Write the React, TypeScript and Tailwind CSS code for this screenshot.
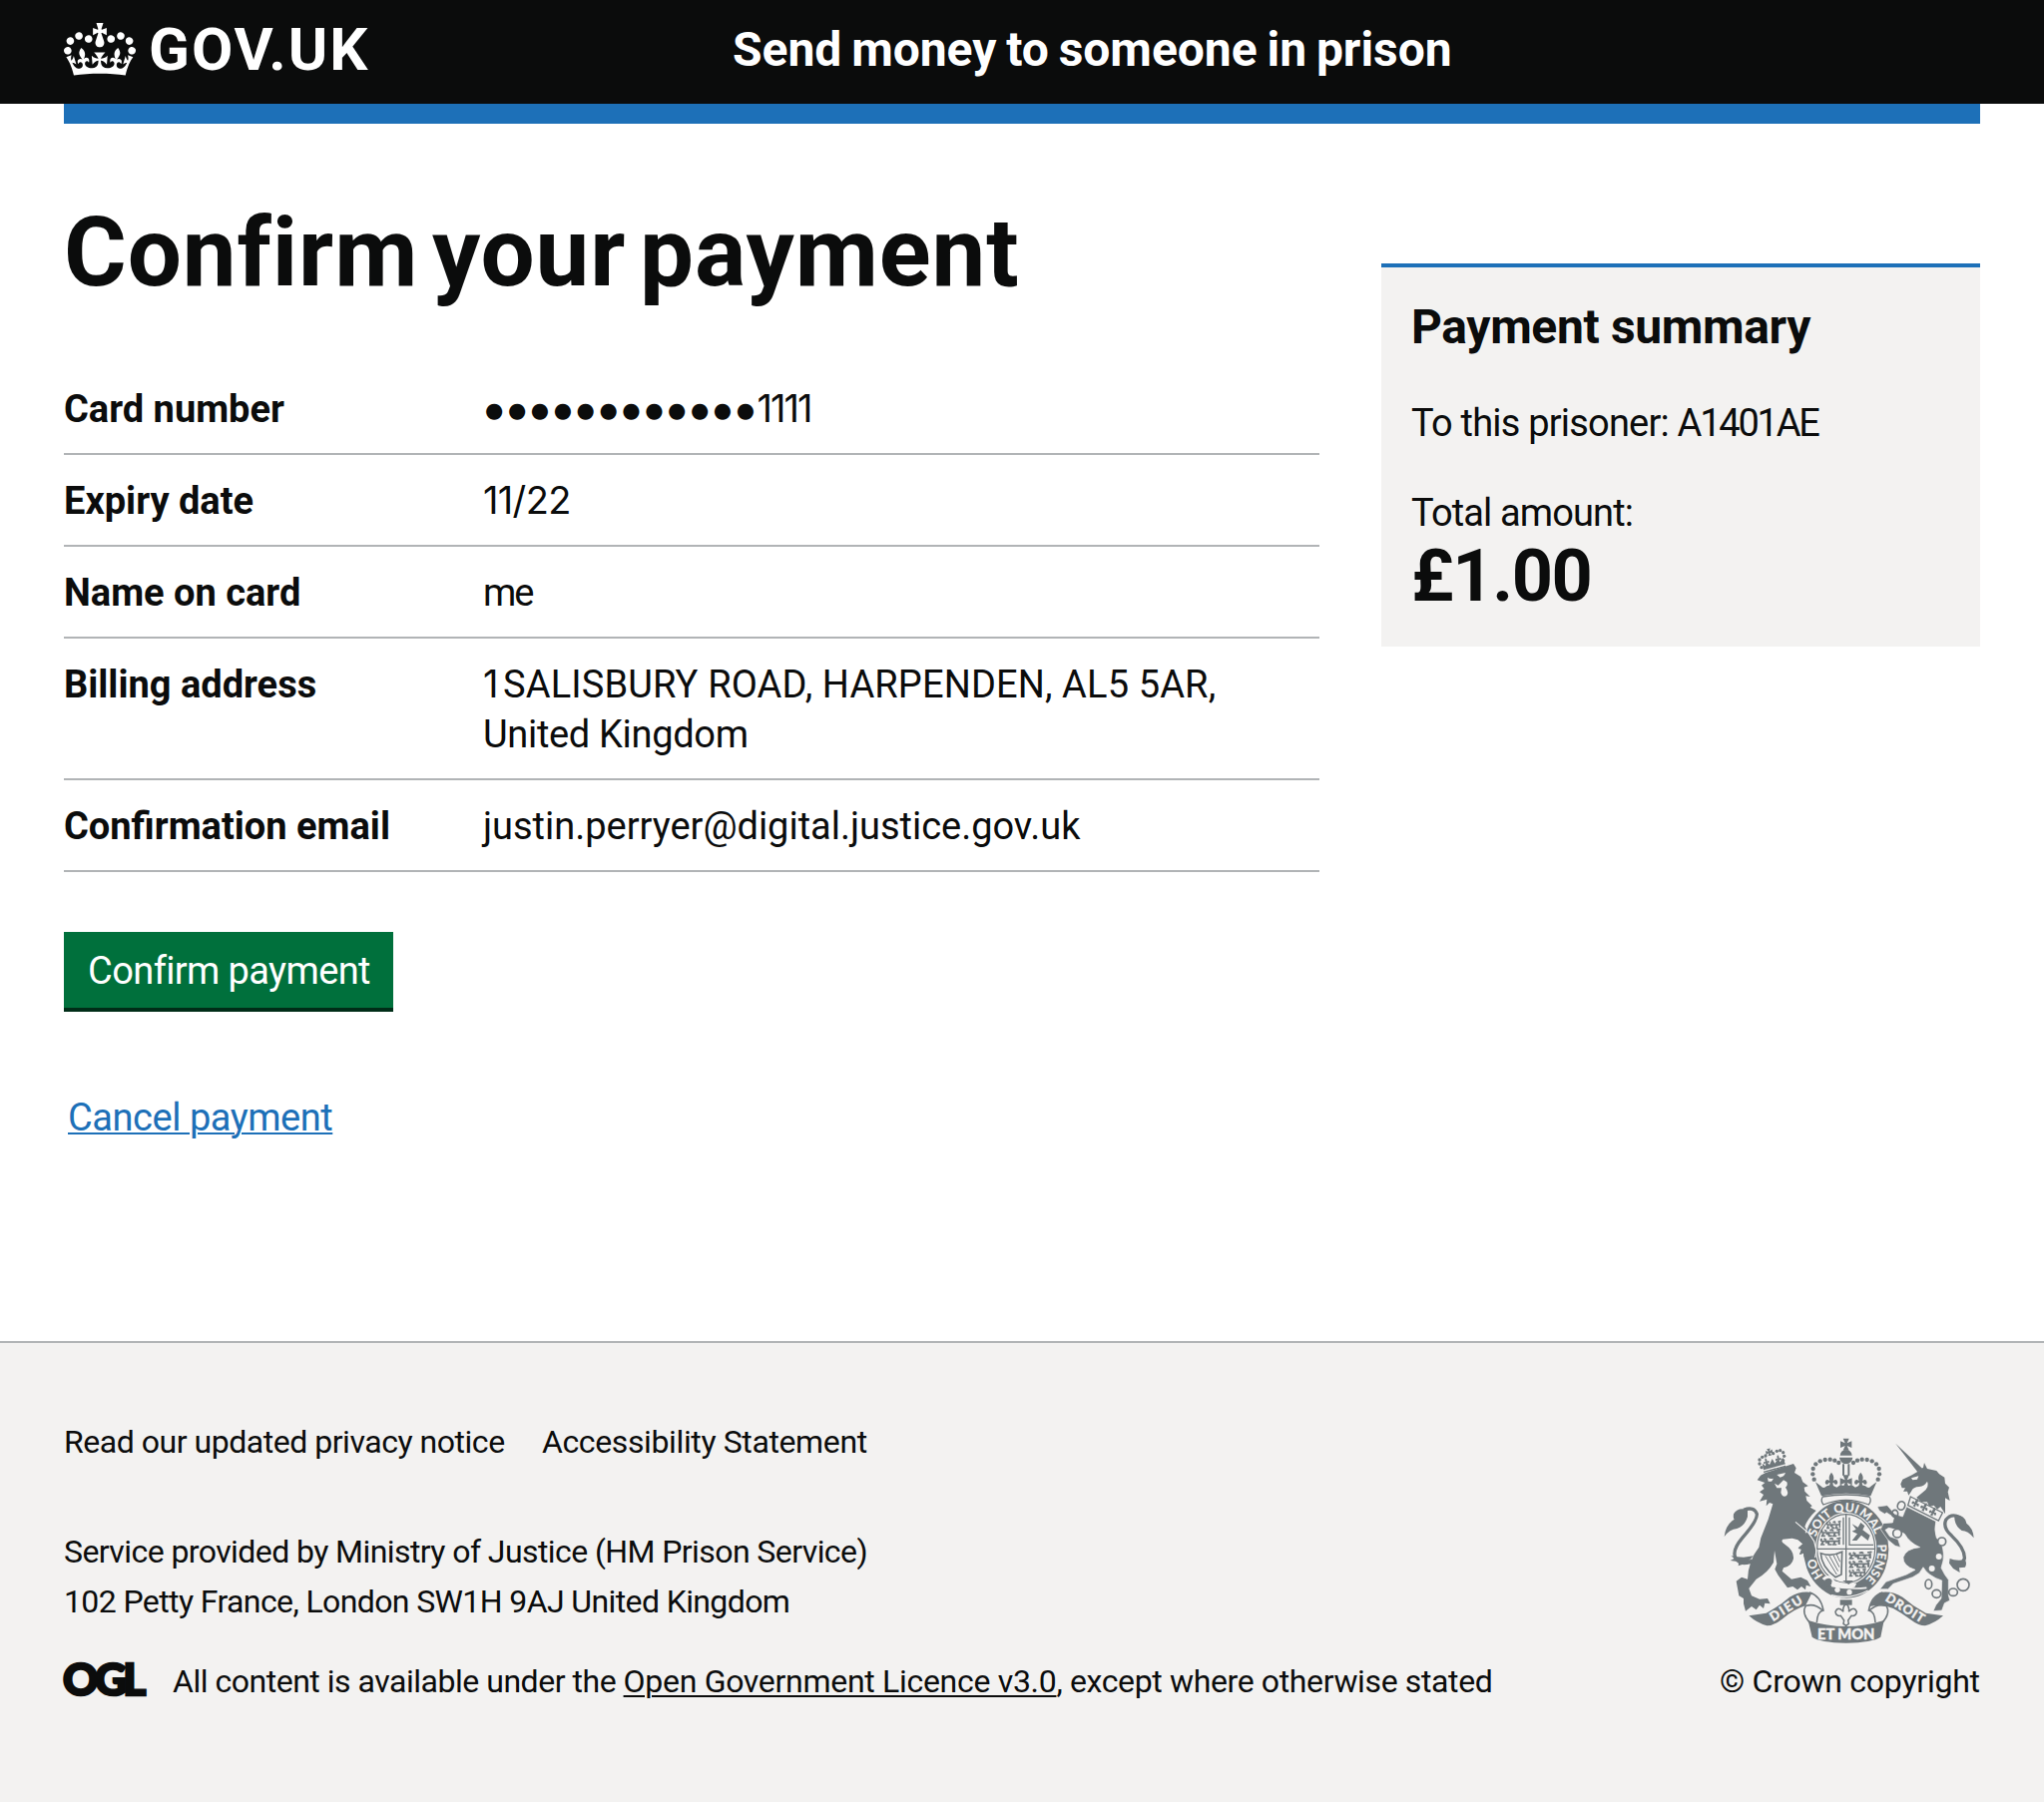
import React from 'react';

const CROWN =
  'M25 30.2c3.5 1.5 7.7-.2 9.1-3.7 1.5-3.6-.2-7.8-3.9-9.2-3.6-1.4-7.6.3-9.1 3.9-1.4 3.5.3 7.5 3.9 9zM9 39.5c3.6 1.5 7.8-.2 9.2-3.7 1.5-3.6-.2-7.8-3.9-9.1-3.6-1.5-7.6.2-9.1 3.8-1.4 3.5.3 7.5 3.8 9zM4.4 57.2c3.5 1.5 7.7-.2 9.1-3.8 1.5-3.6-.2-7.7-3.9-9.1-3.5-1.5-7.6.3-9.1 3.8-1.4 3.5.3 7.6 3.9 9.1zm38.3-21.4c3.5 1.5 7.7-.2 9.1-3.8 1.5-3.6-.2-7.7-3.9-9.1-3.6-1.5-7.6.3-9.1 3.8-1.3 3.6.4 7.7 3.9 9.1zm64.4-5.6c-3.6 1.5-7.8-.2-9.1-3.7-1.5-3.6.2-7.8 3.8-9.2 3.6-1.4 7.7.3 9.2 3.9 1.3 3.5-.4 7.5-3.9 9zm15.9 9.3c-3.6 1.5-7.7-.2-9.1-3.7-1.5-3.6.2-7.8 3.7-9.1 3.6-1.5 7.7.2 9.2 3.8 1.5 3.5-.3 7.5-3.8 9zm4.7 17.7c-3.6 1.5-7.8-.2-9.2-3.8-1.5-3.6.2-7.7 3.9-9.1 3.6-1.5 7.7.3 9.2 3.8 1.3 3.5-.4 7.6-3.9 9.1zM89.3 35.8c-3.6 1.5-7.8-.2-9.2-3.8-1.4-3.6.2-7.7 3.9-9.1 3.6-1.5 7.7.3 9.2 3.8 1.4 3.6-.3 7.7-3.9 9.1zM69.7 17.7l8.9 4.7V9.3l-8.9 2.8c-.2-.3-.5-.6-.9-.9L72.4 0H59.6l3.5 11.2c-.3.3-.6.5-.9.9l-8.8-2.8v13.1l8.8-4.7c.3.3.6.7.9.9l-5 15.4v.1c-.2.8-.4 1.6-.4 2.4 0 4.1 3.1 7.5 7 8.1h.2c.3 0 .7.1 1 .1.4 0 .7 0 1-.1h.2c4-.6 7.1-4.1 7.1-8.1 0-.8-.1-1.7-.4-2.4V34l-5.1-15.4c.4-.2.7-.6 1-.9zM66 92.8c16.9 0 32.8 1.1 47.1 3.2 4-16.9 8.9-26.7 14-33.5l-9.6-3.4c1 4.9 1.1 7.2 0 10.2-1.5-1.4-3-4.3-4.2-8.7L108.6 76c2.8-2 5-3.2 7.5-3.3-4.4 9.4-10 11.9-13.6 11.2-4.3-.8-6.3-4.6-5.6-7.9 1-4.7 5.7-5.9 8-.5 4.3-8.7-3-11.4-7.6-8.8 7.1-7.2 7.9-13.5 2.1-21.1-8 6.1-8.1 12.3-4.5 20.8-4.7-5.4-12.1-2.5-9.5 6.2 3.4-5.2 7.9-2 7.2 3.1-.6 4.3-6.4 7.8-13.5 7.2-10.3-.9-10.9-8-11.2-13.8 2.5-.5 7.1 1.8 11 7.3L80.2 60c-4.1 4.4-8 5.3-12.3 5.4 1.4-4.4 8-11.6 8-11.6H55.5s6.4 7.2 7.9 11.6c-4.2-.1-8-1-12.3-5.4l1.4 16.4c3.9-5.5 8.5-7.7 10.9-7.3-.3 5.8-.9 12.8-11.1 13.8-7.2.6-12.9-2.9-13.5-7.2-.7-5 3.8-8.3 7.1-3.1 2.7-8.7-4.6-11.6-9.4-6.2 3.7-8.5 3.6-14.7-4.6-20.8-5.8 7.6-5 13.9 2.2 21.1-4.7-2.6-11.9.1-7.7 8.8 2.3-5.5 7.1-4.2 8.1.5.7 3.3-1.3 7.1-5.7 7.9-3.5.7-9-1.8-13.5-11.2 2.5.1 4.7 1.3 7.5 3.3l-4.7-15.4c-1.2 4.4-2.7 7.2-4.3 8.7-1.1-3-.9-5.3 0-10.2l-9.5 3.4c5 6.9 9.9 16.7 14 33.5 14.8-2.1 30.8-3.2 47.7-3.2z';

const INK = '#6f777b';
const PAPER = '#f3f2f1';

const arch: [number, number][] = [
  [324, 158], [320, 142], [321, 126], [329, 112], [342, 103], [357, 99], [372, 98], [386, 101], [398, 108],
];

const lionCrown: [number, number][] = [
  [166, 122], [160, 111], [160, 99], [168, 91], [178, 87], [201, 80], [212, 73], [222, 71], [231, 77], [234, 88], [231, 101],
];

function Fleur({ x, y, s = 1, r = 0 }: { x: number; y: number; s?: number; r?: number }) {
  return (
    <path
      transform={`translate(${x} ${y}) rotate(${r}) scale(${s})`}
      d="M0-22Q10-10 5 2Q16-6 18 6Q18 14 10 12Q8 6 4 8L6 20H-6L-4 8Q-8 6-10 12Q-18 14-18 6Q-16-6-5 2Q-10-10 0-22Z"
    />
  );
}

function Cross({ x, y, s = 1, r = 0 }: { x: number; y: number; s?: number; r?: number }) {
  return (
    <path
      transform={`translate(${x} ${y}) rotate(${r}) scale(${s})`}
      d="M-9-18H9L3-4L17-10V10L3 4L9 18H-9L-3 4L-17 10V-10L-3-4Z"
    />
  );
}

/* One walking lion of the shield's quarters. */
function Passant({ x, y, w = 1 }: { x: number; y: number; w?: number }) {
  return (
    <g transform={`translate(${x} ${y}) scale(${w} 1)`} fill="none" stroke={INK} strokeWidth="5">
      <path d="M2 2Q-2 12 8 10H44M6 10L2 20H10M18 10L20 20H28M36 10L32 20H40M46 4V20M8 2L14 6M22 4Q30-2 30 6M40 2L50 0M12 14H22" />
    </g>
  );
}

function RoyalArms() {
  return (
    <svg viewBox="52 33 756 618" className="h-[206px] w-[252px]" fill={INK} aria-label="Royal coat of arms">
      {/* lion's crown */}
      {lionCrown.map(([x, y]) => <circle key={`${x}-${y}`} cx={x} cy={y} r="5" />)}
      <Cross x={189} y={76} s={0.6} r={-13} />
      <path d="M168 110L178 118L180 104L190 114L198 96L206 110L214 98L222 106L230 92L236 108L238 112L172 130Z" />
      <path d="M172 136L238 118" stroke={INK} strokeWidth="4" />
      <Fleur x={180} y={104} s={0.5} r={-15} />
      <Fleur x={216} y={95} s={0.5} r={-10} />

      {/* lion */}
      <path d="M153 160L163 146L178 138L262 111L270 124L265 138L284 150L290 166L306 178L294 182L296 194L312 210L299 208L302 222L318 238L312 242L330 252L318 264Q300 285 296 300L310 322L326 346L330 372L326 390L316 384L318 396L304 388L294 392L292 380L280 384L286 368L276 366L290 352L276 340L258 335L230 338Q222 346 236 353Q264 372 262 396Q258 418 232 424L228 434L256 458L284 452L304 462L314 480L300 476L298 490L286 480L274 490L260 480L244 484L216 446L206 428L212 412L205 372L202 408Q184 440 150 458L128 486L136 508L160 518L184 516L192 532L176 530L172 546L160 536L150 550L136 540L118 554L112 532L112 516L98 508L94 486L90 464L106 452L124 458Q126 402 158 362L164 334L186 278L200 232L190 228L180 238L182 218L160 224L172 204L160 196L174 186L166 176L176 168Z" />
      <g fill={PAPER}>
        <path d="M184 152Q190 158 202 155L196 164L186 164ZM212 144L238 138Q234 150 222 152Z" />
        <path d="M205 170L216 176L232 160L242 166Q246 176 238 182Q250 198 240 208Q228 212 224 198L226 184L212 184Z" />
      </g>
      <path d="M138 402Q104 420 88 394Q76 372 108 334Q154 282 152 262Q144 238 112 250" fill="none" stroke={INK} strokeWidth="10" />
      <path d="M124 250Q96 240 82 262Q80 276 84 278Q58 294 54 330Q70 308 92 306Q116 298 124 270Z" />
      <path d="M74 388Q92 392 112 392L142 388L128 402L136 412L108 414L96 418L98 406L72 402L84 396Z" />

      {/* unicorn */}
      <path d="M569 50L650 126L635 136Z" />
      <path d="M584 172L590 158L618 145L636 134L652 122L655 108L664 126L692 132L700 142L716 152L718 170L730 182L726 196L732 222L718 214L718 262L704 240L694 248L684 236L670 240L664 226L646 226L632 212L652 196Q672 180 664 164Q656 178 640 180Q622 180 616 194L608 206L604 194L592 194L598 184L588 184Z" />
      <path d="M616 154L638 148L634 158L620 160Z" fill={PAPER} />
      <path d="M614 210L710 258L698 282L606 236Z" fill={PAPER} stroke={INK} strokeWidth="4" />
      <Fleur x={630} y={228} s={0.65} r={26} />
      <Fleur x={656} y={241} s={0.65} r={26} />
      <Fleur x={682} y={255} s={0.65} r={26} />
      <path d="M762 272Q736 258 720 280Q710 304 738 328Q778 366 776 396Q768 420 736 408" fill="none" stroke={INK} strokeWidth="10" />
      <path d="M746 266Q776 262 782 290Q802 304 804 334Q786 312 768 312Q744 296 746 266Z" />
      <path d="M732 396Q748 404 778 400Q784 412 778 422L760 424L762 438L742 426L730 410Z" />

      {/* garter and shield */}
      <ellipse cx="420" cy="368" rx="131" ry="150" fill={PAPER} />
      <ellipse cx="420" cy="368" rx="128" ry="147" />
      <ellipse cx="420" cy="366" rx="92" ry="109" fill={PAPER} />
      <ellipse cx="420" cy="366" rx="87" ry="103" fill="none" stroke={INK} strokeWidth="3.5" />
      <path d="M332 367H508M420 262V464M430 272V355H502M412 272V355" stroke={INK} strokeWidth="4" fill="none" />
      <Passant x={362} y={284} w={0.85} />
      <Passant x={346} y={308} w={1.15} />
      <Passant x={344} y={334} w={1.2} />
      <Passant x={430} y={376} w={1.35} />
      <Passant x={430} y={402} w={1.25} />
      <Passant x={430} y={428} />
      <path d="M438 292L456 302L464 288L476 298L470 310L492 326L486 342L466 326L452 342L438 342L454 322L438 314L450 308Z" />
      <path d="M344 380Q376 392 408 376L406 444L388 452Q346 420 344 380Z" fill="none" stroke={INK} strokeWidth="5" />
      <path d="M358 388L392 444M370 388L396 434M382 386L400 422M392 384L402 406" stroke={INK} strokeWidth="3" />
      <path id="garter" d="M420 481A95 113 0 0 1 420 255A95 113 0 0 1 420 481" fill="none" />
      <g fill={PAPER} fontFamily="Lato, sans-serif" fontWeight="900" fontSize="37" textAnchor="middle">
        <text><textPath href="#garter" startOffset="16.5%">HO</textPath></text>
        <text><textPath href="#garter" startOffset="37%">SOIT</textPath></text>
        <text><textPath href="#garter" startOffset="50%">QUI</textPath></text>
        <text><textPath href="#garter" startOffset="62%">MAL</textPath></text>
        <text><textPath href="#garter" startOffset="81.5%">PENSE</textPath></text>
      </g>
      <path d="M348 456Q362 440 380 452L386 464Q420 474 452 470L446 482Q410 488 376 478" fill={PAPER} />
      <path d="M356 460Q370 450 378 462L376 474L354 490L346 480L358 478Z" />
      <path d="M376 478Q430 490 482 484" fill="none" stroke={PAPER} strokeWidth="5" />
      <path d="M376 506Q430 522 486 492" fill="none" stroke={PAPER} strokeWidth="4" />
      <path d="M410 462H442L428 474Z" />
      <circle cx="394" cy="490" r="8" fill={PAPER} />
      <circle cx="430" cy="497" r="8" fill={PAPER} />

      {/* lion's foreleg over the garter */}
      <path d="M262 288L302 322L320 346L327 372L324 389L314 382L314 394L303 386L293 392L292 380L280 384L286 368L276 364L290 352L274 338L254 330Z" />
      <path d="M268 286L308 320L324 344L331 372L327 393" fill="none" stroke={PAPER} strokeWidth="3.5" />

      {/* unicorn's body and forelegs over the garter */}
      <path
        d="M602 240L690 284Q684 312 692 334Q718 356 712 402L706 424Q716 446 728 460L728 506L732 522L716 530L708 552L682 554L690 536L706 516L708 462Q666 448 652 422L640 440L620 452L562 472L546 488L522 488L540 466L602 444L628 430Q590 418 592 392Q600 366 642 362Q612 350 596 322Q572 306 548 304L538 310L552 330L576 338L584 362L568 358L546 340L524 308L532 290L560 288L564 272L542 258L536 262L520 252L514 240L544 236L566 262L590 270Z"
        stroke={PAPER}
        strokeWidth="2"
      />
      <g fill="none" stroke={INK} strokeWidth="5">
        <ellipse cx="586" cy="237" rx="11" ry="13" transform="rotate(20 586 237)" />
        <ellipse cx="567" cy="261" rx="9" ry="11" />
        <ellipse cx="574" cy="320" rx="13" ry="13" fill={PAPER} />
        <circle cx="708" cy="345" r="12" fill={PAPER} />
        <ellipse cx="668" cy="473" rx="10" ry="14" />
        <ellipse cx="692" cy="502" rx="13" ry="12" />
        <ellipse cx="742" cy="497" rx="13" ry="11" />
        <circle cx="772" cy="475" r="18" />
      </g>
      <circle cx="699" cy="390" r="9" fill={PAPER} />
      <circle cx="678" cy="426" r="9" fill={PAPER} />

      {/* imperial crown */}
      {arch.map(([x, y]) => (
        <React.Fragment key={`${x}-${y}`}>
          <circle cx={x} cy={y} r="6.5" />
          <circle cx={840 - x} cy={y} r="6.5" />
        </React.Fragment>
      ))}
      <Cross x={420} y={53} />
      <path d="M402 86Q404 70 420 70Q436 70 438 86ZM400 92H440Q438 110 420 112Q402 110 400 92Z" />
      <path d="M412 112V146M428 112V146" stroke={INK} strokeWidth="6" />
      <path d="M328 166L344 178Q352 188 362 178L376 174L392 182L404 174L420 180L436 174L448 182L464 174L478 178Q488 188 496 178L512 166L494 208Q420 192 346 208Z" />
      <Fleur x={376} y={160} s={1.05} />
      <Fleur x={464} y={160} s={1.05} />
      <Cross x={420} y={164} s={1.05} />
      <path d="M350 210Q420 198 490 210Q498 222 488 234Q420 206 352 234Q342 222 350 210Z" fill={PAPER} stroke={INK} strokeWidth="4" />

      {/* pendant */}
      <path d="M402 520H438V536H402Z" />
      <path d="M420 530Q432 544 428 556Q444 538 452 556Q450 570 436 568L426 582L428 592L420 598L412 592L414 582L404 568Q390 570 388 556Q396 538 412 556Q408 544 420 530Z" fill={PAPER} stroke={INK} strokeWidth="4.5" />

      {/* motto ribbon */}
      <path d="M128 568L180 560Q218 540 250 512Q282 492 318 498L298 538Q264 548 228 578Q202 598 182 598Q152 590 128 568Z" />
      <path d="M712 568L660 560Q622 540 590 512Q558 492 522 498Q500 518 490 540Q530 532 562 546Q584 558 612 578Q638 598 658 598Q688 590 712 568Z" />
      <path d="M306 582Q420 618 534 582L524 632Q500 648 420 650Q340 648 318 632Z" />
      <path d="M310 498Q344 508 352 552Q334 554 332 588M300 536Q284 560 312 590M300 538Q326 530 350 552" fill="none" stroke={INK} strokeWidth="4.5" />
      <path d="M530 498Q496 508 488 552Q506 554 508 588M540 536Q556 560 528 590M540 538Q514 530 490 552" fill="none" stroke={INK} strokeWidth="4.5" />
      <g fill={PAPER} stroke={PAPER} strokeWidth="1" fontFamily="Lato, sans-serif" fontWeight="900" textAnchor="middle">
        <text transform="translate(246 557) rotate(-32)" fontSize="38" textLength="108">DIEU</text>
        <text transform="translate(591 556) rotate(32)" fontSize="38" textLength="130">DROIT</text>
        <text x="420" y="639" fontSize="44" textLength="172" lengthAdjust="spacingAndGlyphs">ET MON</text>
      </g>
    </svg>
  );
}

function Row({ label, children }: { label: string; children: React.ReactNode }) {
  return (
    <div className="flex border-b-2 border-[#b1b4b6] pt-[21px] pb-[19px] text-[38px] leading-[50px]">
      <dt className="w-[420px] shrink-0 font-bold">{label}</dt>
      <dd className="whitespace-nowrap">{children}</dd>
    </div>
  );
}

export default function App() {
  return (
    <div className="flex min-h-[1806px] w-[2048px] flex-col bg-white font-[Roboto,sans-serif] text-[#0b0c0c]">
      <header className="bg-[#0b0c0c] px-16 text-white">
        <div className="flex h-[104px] items-start">
          <a className="flex w-[670px] items-start gap-[13px]">
            <svg viewBox="0 0 132 97" className="mt-[23px] h-[53px] w-[72px]" fill="currentColor">
              <path fillRule="evenodd" d={CROWN} />
            </svg>
            <span className="mt-5 text-[60px] leading-[60px] font-bold tracking-[1.98px]">GOV.UK</span>
          </a>
          <span className="mt-5 text-[48px] leading-[60px] font-bold tracking-[-0.04px] [word-spacing:-2px]">Send money to someone in prison</span>
        </div>
      </header>
      <div className="mx-16 h-5 bg-[#1d70b8]" />

      <main className="flex flex-1 justify-between px-16">
        <section className="w-[1258px] pt-[79px]">
          <h1 className="text-[96px] leading-[100px] font-bold tracking-[0.9px] [word-spacing:-11px]">Confirm your payment</h1>
          <dl className="mt-[61px]">
            <Row label="Card number">
              <span className="relative -top-[5px] ml-0.5 font-['DejaVu_Sans',sans-serif] text-[21px] leading-none tracking-[4.56px]">●●●●●●●●●●●●</span>
              <span className="-ml-0.5 font-[Inter,sans-serif] leading-none tracking-[-2px]">1111</span>
            </Row>
            <Row label="Expiry date"><span className="font-[Inter,sans-serif] leading-none tracking-[-0.65px]">11/22</span></Row>
            <Row label="Name on card"><span className="tracking-[-2px]">me</span></Row>
            <Row label="Billing address">
              <span className="tracking-[0.13px]">
                <span className="font-[Inter,sans-serif] leading-none tracking-[-5px]">1</span> SALISBURY ROAD, HARPENDEN, AL5 5AR,
              </span>
              <br />
              <span className="tracking-[-0.32px]">United Kingdom</span>
            </Row>
            <Row label="Confirmation email"><span className="tracking-[-0.02px]">justin.perryer@digital.justice.gov.uk</span></Row>
          </dl>
          <button className="mt-[60px] block h-20 w-[330px] border-b-4 border-[#002d18] bg-[#00703c] pt-0.5 pl-px text-[38px] leading-[74px] tracking-[-0.62px] text-white">
            Confirm payment
          </button>
          <a className="mt-[81px] ml-1 block w-fit text-[38px] leading-[50px] tracking-[-0.46px] text-[#1d70b8] underline decoration-2 underline-offset-2">
            Cancel payment
          </a>
        </section>

        <aside className="mt-[140px] h-[384px] w-[600px] border-t-4 border-[#1d70b8] bg-[#f3f2f1] px-[30px] pt-[30px]">
          <h2 className="text-[48px] leading-[60px] font-bold tracking-[-0.35px]">Payment summary</h2>
          <p className="mt-[41px] text-[38px] leading-[50px] tracking-[-0.8px]">
            To this prisoner: <span className="tracking-[-2.2px]">A1401AE</span>
          </p>
          <p className="mt-10 text-[38px] leading-[50px] tracking-[-0.88px]">Total amount:</p>
          <p className="mt-px text-[72px] leading-[76px] font-bold tracking-[-1.45px]">£1.00</p>
        </aside>
      </main>

      <footer className="flex h-[462px] justify-between border-t-2 border-[#b1b4b6] bg-[#f3f2f1] px-16 text-[32px] leading-[50px]">
        <div className="pt-[74px]">
          <div className="flex tracking-[-0.47px]">
            <a className="w-[479px]">Read our updated privacy notice</a>
            <a className="tracking-[-0.38px]">Accessibility Statement</a>
          </div>
          <div className="mt-[60px]">
            <p className="tracking-[-0.58px]">Service provided by Ministry of Justice (HM Prison Service)</p>
            <p className="tracking-[-0.61px]">102 Petty France, London SW1H 9AJ United Kingdom</p>
          </div>
          <div className="mt-[30px] flex">
            <span className="mt-[5px] -ml-px w-[110px] font-[Lato,sans-serif] text-[44px] leading-[34px] font-black tracking-[-3.6px] [-webkit-text-stroke:2.5px_#0b0c0c]">OGL</span>
            <p className="tracking-[-0.48px] whitespace-nowrap">
              All content is available under the{' '}
              <a className="tracking-[-0.3px] underline decoration-2 underline-offset-[3px]">Open Government Licence v3.0</a>
              <span className="tracking-[-0.37px]">, except where otherwise stated</span>
            </p>
          </div>
        </div>
        <div className="w-[261px] pt-[95px]">
          <div className="ml-1"><RoyalArms /></div>
          <p className="mt-[13px] tracking-[-0.25px] whitespace-nowrap">© Crown copyright</p>
        </div>
      </footer>
    </div>
  );
}
